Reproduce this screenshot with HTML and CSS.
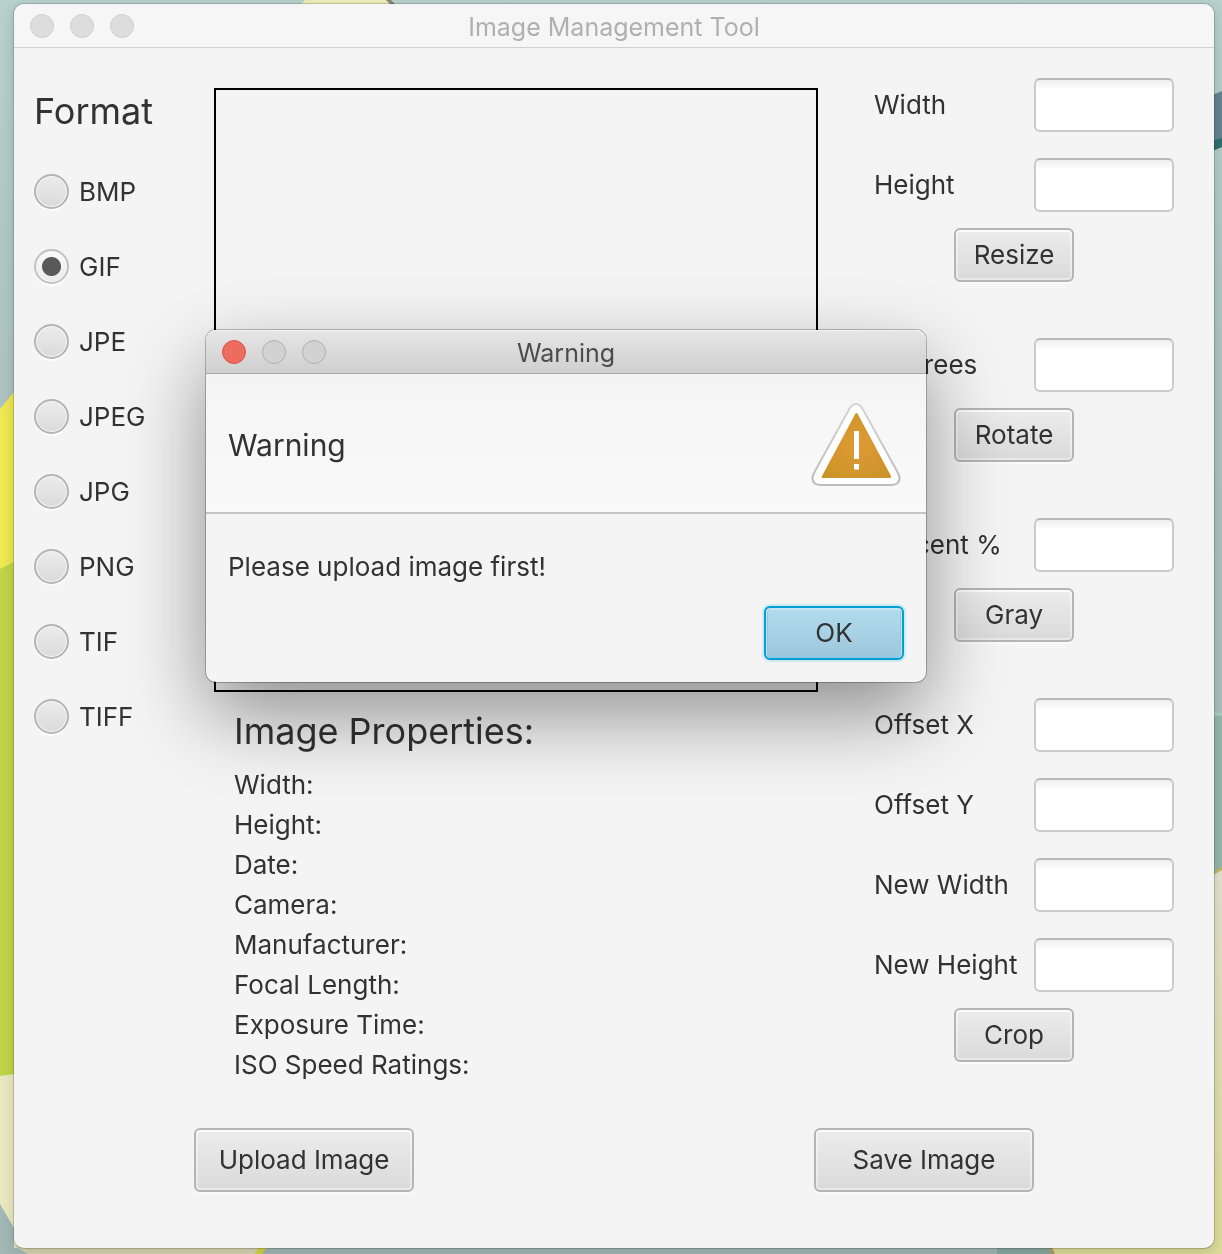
FILE: index.html
```html
<!DOCTYPE html>
<html lang="en">
<head>
<meta charset="utf-8">
<title>Image Management Tool</title>
<meta name="viewport" content="width=device-width, initial-scale=1">
<link rel="stylesheet" href="styles.css">
</head>
<body>
<svg class="wallpaper" viewBox="0 0 1222 1254" preserveAspectRatio="none" aria-hidden="true">
  <defs>
    <linearGradient id="sky" x1="0" y1="0" x2="0" y2="1">
      <stop offset="0" stop-color="#b7d1cc"/>
      <stop offset=".3" stop-color="#adc4c1"/>
      <stop offset="1" stop-color="#a2b8b5"/>
    </linearGradient>
    <linearGradient id="sand" x1="0" y1="0" x2="0" y2="1">
      <stop offset="0" stop-color="#e2e2d0"/>
      <stop offset="1" stop-color="#dedc98"/>
    </linearGradient>
  </defs>
  <rect width="1222" height="1254" fill="url(#sky)"/>
  <path d="M301 4 305 0H386L391 4Z" fill="#efedba"/>
  <path d="M386 0H391L395 4H390Z" fill="#88897a"/>
  <path d="M0 409 14 392V580H0Z" fill="#efe953"/>
  <path d="M0 569 14 562V1080H0Z" fill="#bfd546"/>
  <path d="M0 1076 14 1074V1224L28 1254H120V1248H14V1228L0 1204Z" fill="#ebe9c2"/>
  <path d="M14 1246H260L255 1254H28Z" fill="#d8d6b1"/>
  <path d="M259 1246H268L262 1254H255Z" fill="#d6d745"/>
  <path d="M1210 96 1222 91V139L1210 143Z" fill="#648391"/>
  <path d="M1210 142 1222 138V147L1210 152Z" fill="#2e706e"/>
  <path d="M1210 713 1222 714V870H1210Z" fill="#96b6ab"/>
  <path d="M1210 712 1222 713V716L1210 715Z" fill="#a9cfc4"/>
  <path d="M997 1247H1048L1052 1254H997Z" fill="#88a99f"/>
  <path d="M1210 874 1222 868V1254H1054L1051 1247H1210Z" fill="url(#sand)"/>
  <path d="M1210 874 1222 866V870L1210 877Z" fill="#bdb66a"/>
  <path d="M1048 1247H1052L1055 1254H1051Z" fill="#aaa366"/>
</svg>

<main class="window">
  <header class="titlebar">
    <span class="lights"><i class="light"></i><i class="light"></i><i class="light"></i></span>
    <h1 class="title">Image Management Tool</h1>
  </header>

  <div class="content">
    <fieldset class="formats">
      <legend class="heading">Format</legend>
      <label class="option"><input class="radio" type="radio" name="format">BMP</label>
      <label class="option"><input class="radio" type="radio" name="format" checked>GIF</label>
      <label class="option"><input class="radio" type="radio" name="format">JPE</label>
      <label class="option"><input class="radio" type="radio" name="format">JPEG</label>
      <label class="option"><input class="radio" type="radio" name="format">JPG</label>
      <label class="option"><input class="radio" type="radio" name="format">PNG</label>
      <label class="option"><input class="radio" type="radio" name="format">TIF</label>
      <label class="option"><input class="radio" type="radio" name="format">TIFF</label>
    </fieldset>

    <section class="preview">
      <div class="canvas"></div>
      <div class="properties">
        <h2 class="heading">Image Properties:</h2>
        <ul class="property-list">
          <li>Width:</li>
          <li>Height:</li>
          <li>Date:</li>
          <li>Camera:</li>
          <li>Manufacturer:</li>
          <li>Focal Length:</li>
          <li>Exposure Time:</li>
          <li>ISO Speed Ratings:</li>
        </ul>
      </div>
    </section>

    <section class="tools">
      <form class="tool">
        <div class="row"><label for="width">Width</label><input class="field" id="width" type="text"></div>
        <div class="row"><label for="height">Height</label><input class="field" id="height" type="text"></div>
        <button class="button" type="button">Resize</button>
      </form>
      <form class="tool">
        <div class="row"><label for="degrees">Degrees</label><input class="field" id="degrees" type="text"></div>
        <button class="button" type="button">Rotate</button>
      </form>
      <form class="tool">
        <div class="row"><label for="percent">Percent %</label><input class="field" id="percent" type="text"></div>
        <button class="button" type="button">Gray</button>
      </form>
      <form class="tool">
        <div class="row"><label for="offset-x">Offset X</label><input class="field" id="offset-x" type="text"></div>
        <div class="row"><label for="offset-y">Offset Y</label><input class="field" id="offset-y" type="text"></div>
        <div class="row"><label for="new-width">New Width</label><input class="field" id="new-width" type="text"></div>
        <div class="row"><label for="new-height">New Height</label><input class="field" id="new-height" type="text"></div>
        <button class="button" type="button">Crop</button>
      </form>
    </section>
  </div>

  <footer class="actions">
    <button class="button button-large" type="button">Upload Image</button>
    <button class="button button-large" type="button">Save Image</button>
  </footer>

  <dialog class="alert" open aria-labelledby="alert-title">
    <header class="titlebar titlebar-active">
      <span class="lights"><i class="light light-close"></i><i class="light"></i><i class="light"></i></span>
      <h2 class="title" id="alert-title">Warning</h2>
    </header>
    <div class="alert-header">
      <p class="alert-heading">Warning</p>
      <svg class="alert-icon" viewBox="0 0 90 84" aria-hidden="true">
        <defs>
          <radialGradient id="amber" cx=".5" cy=".5" r=".6">
            <stop offset="0" stop-color="#e09a35"/>
            <stop offset="1" stop-color="#cb9429"/>
          </radialGradient>
          <linearGradient id="rim" x1="0" y1="0" x2="0" y2="1">
            <stop offset="0" stop-color="#d4d4d4"/>
            <stop offset="1" stop-color="#bcbcbc"/>
          </linearGradient>
        </defs>
        <path d="M38 6.500Q41 1 45 1T52 6.500L87 70Q90.500 77 86 80.500 84 82 80 82H10Q6 82 4 80.500-.500 77 3 70Z" fill="#fff" stroke="url(#rim)" stroke-width="2"/>
        <path d="M44.500 10.500Q45.500 9.500 46.500 10.500L80 73Q80.500 75 78.500 75H12Q10 75 11 73Z" fill="url(#amber)"/>
        <path d="M43 28H48V56H43ZM43 61H48V66.500H43Z" fill="#fff"/>
      </svg>
    </div>
    <div class="alert-body">
      <p class="alert-message">Please upload image first!</p>
      <button class="button button-default" type="button">OK</button>
    </div>
  </dialog>
</main>
</body>
</html>
```
FILE: styles.css
```css
* {
  box-sizing: border-box;
}

body {
  margin: 0;
  padding: 4px 8px 6px 14px;
  font: 26px/40px Inter, "Liberation Sans", sans-serif;
  color: #323232;
}

h1, h2, p, ul, fieldset {
  margin: 0;
  padding: 0;
  font-weight: 400;
}

.wallpaper {
  position: fixed;
  inset: 0;
  z-index: -1;
  width: 100%;
  height: 100%;
}

.window {
  position: relative;
  background: #f4f4f4;
  border-radius: 10px;
  box-shadow: 0 0 0 1px rgba(0, 0, 0, .16), 0 4px 14px rgba(0, 0, 0, .16);
}

.titlebar {
  display: grid;
  grid-template-columns: 1fr auto 1fr;
  align-items: center;
  height: 44px;
  padding: 0 16px;
  background: #f6f6f6;
  border-bottom: 1px solid #d0d0d0;
  border-radius: 10px 10px 0 0;
}

.title {
  padding-top: 2px;
  font-size: 25px;
  color: #b0b0b0;
}

.lights {
  display: flex;
  gap: 16px;
}

.light {
  width: 24px;
  height: 24px;
  border: 1px solid #d0d0d0;
  border-radius: 50%;
  background: #dddddd;
}

.content {
  display: grid;
  grid-template-columns: 180px minmax(0, 1fr) 300px;
  padding: 30px 40px 0 20px;
}

.heading {
  font-size: 36px;
}

.formats {
  border: 0;
}

.formats .heading {
  padding: 13px 0 23px;
}

.option {
  display: flex;
  align-items: center;
  gap: 10px;
  height: 75px;
}

.radio {
  appearance: none;
  width: 35px;
  height: 35px;
  margin: 0;
  border: 2px solid #b5b5b5;
  border-radius: 50%;
  background: linear-gradient(#ececec, #dadada);
  box-shadow: inset 0 0 0 1px #f6f6f6, 0 2px 0 #fbfbfb;
}

.radio:checked {
  border-color: #c2c2c2;
  background:
    radial-gradient(circle, #595959 9px, transparent 10px),
    linear-gradient(#fafafa, #ebebeb);
}

.preview {
  margin: 10px 56px 0 0;
}

.canvas {
  aspect-ratio: 1;
  border: 2px solid #000;
}

.properties {
  padding: 19px 20px 0;
}

.property-list {
  margin-top: 14px;
  list-style: none;
}

.tools {
  display: flex;
  flex-direction: column;
  gap: 56px;
}

.tool {
  display: flex;
  flex-direction: column;
  gap: 26px;
}

.row {
  display: grid;
  grid-template-columns: 1fr 140px;
  align-items: center;
  white-space: nowrap;
}

.field {
  width: 100%;
  height: 54px;
  padding: 0 12px;
  border: 2px solid #cbcbcb;
  border-top-color: #b9b9b9;
  border-radius: 6px;
  background: linear-gradient(#efefef, #fff 10px);
  font: inherit;
  color: inherit;
}

.button {
  height: 54px;
  padding: 0 18px;
  border: 2px solid #b5b5b5;
  border-radius: 6px;
  background: linear-gradient(#ececec, #dadada);
  box-shadow: inset 0 2px 0 #fcfcfc, inset 0 0 0 2px rgba(255, 255, 255, .4), 0 2px 0 #fafafa;
  font: inherit;
  color: inherit;
}

.tool .button {
  width: 120px;
  margin: -10px 0 0 80px;
  padding: 0;
}

.actions {
  display: flex;
  justify-content: space-between;
  padding: 43px 180px 56px;
}

.button-large {
  width: 220px;
  height: 64px;
}

.alert {
  position: absolute;
  top: 326px;
  left: 192px;
  width: 720px;
  margin: 0;
  padding: 0;
  border: 0;
  border-radius: 10px;
  background: #f4f4f4;
  color: inherit;
  box-shadow: 0 0 0 1px rgba(0, 0, 0, .25), 0 32px 80px rgba(0, 0, 0, .42);
}

.titlebar-active {
  background: linear-gradient(#e6e6e6, #cfcfcf);
  border-bottom-color: #a6a6a6;
  box-shadow: inset 0 1px 0 #f4f4f4;
}

.titlebar-active .title {
  color: #4c4c4c;
}

.titlebar-active .light {
  border-color: #b0b0b0;
  background: #d2d2d2;
}

.titlebar-active .light-close {
  border-color: #dc5448;
  background: #ed6b5f;
}

.alert-header {
  display: flex;
  align-items: center;
  justify-content: space-between;
  height: 140px;
  padding: 3px 25px 0 22px;
  border-bottom: 2px solid #c6c6c6;
  background: linear-gradient(#f4f4f4, #fafafa);
}

.alert-heading {
  font-size: 30px;
}

.alert-icon {
  width: 90px;
  height: 84px;
}

.alert-body {
  display: flex;
  flex-direction: column;
  padding: 33px 22px 22px;
}

.alert-body .button {
  align-self: flex-end;
  width: 140px;
  margin-top: 19px;
}

.button-default {
  border-color: #039ed3;
  background: linear-gradient(#b2dcee, #9dc6db);
  box-shadow: inset 0 1px 0 1px #c4e6f3, inset 0 0 0 2px #8ecbe3, 0 0 0 2px #d0e8f0;
}
```
